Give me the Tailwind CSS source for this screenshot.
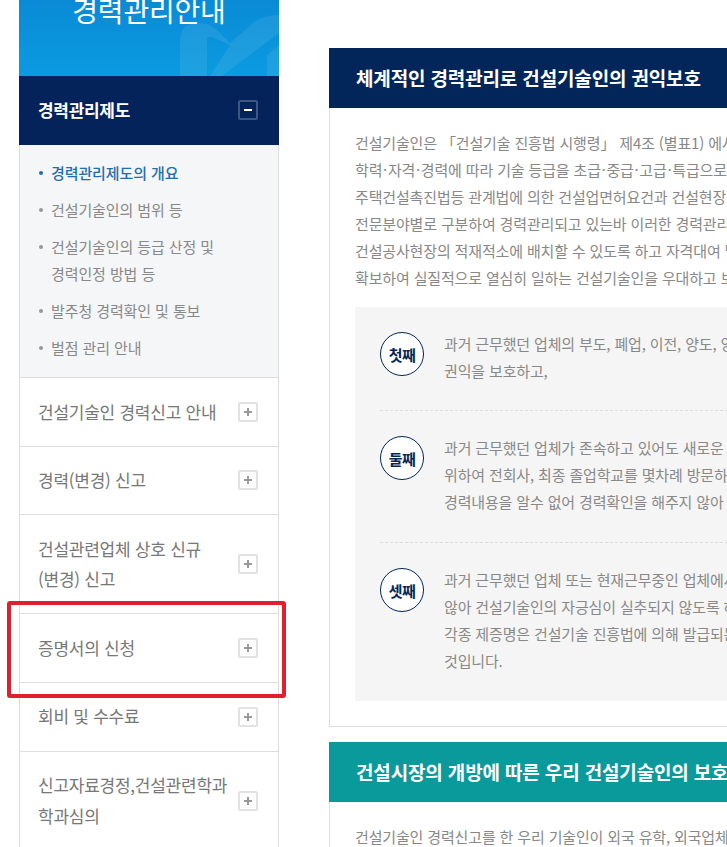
<!DOCTYPE html>
<html lang="ko">
<head>
<meta charset="UTF-8">
<title>경력관리안내</title>
<script src="https://cdn.jsdelivr.net/npm/@tailwindcss/browser@4"></script>
</head>
<body class="bg-white">
<div class="relative flex w-[727px] h-[847px] overflow-hidden font-['Noto_Sans_CJK_KR','Noto_Sans',sans-serif]">

  <!-- left menu -->
  <aside class="w-[260px] ml-[19px] shrink-0">
    <div class="relative h-[76px] overflow-hidden bg-gradient-to-b from-[#0a8ad6] to-[#0a9be0]">
      <h2 class="-mt-[10px] text-center text-[28px] leading-[40px] tracking-[-0.2px] text-white">경력관리안내</h2>
      <svg class="absolute left-[160px] top-0" width="100" height="76" viewBox="0 0 100 76" fill="#fff" fill-opacity=".08">
        <path d="M1 76V38Q3 24 16 23H22Q32 24 38 30L51 43 78 20Q88 15 100 15V33L43 76H31L51 45 33 37H28V76Z"/>
        <path d="M100 45 88 55V76H100Z"/>
      </svg>
    </div>

    <div class="flex items-center justify-between h-[69px] pb-0.5 pl-[19px] pr-[21px] bg-[#03235a]">
      <span class="text-[17px] font-bold tracking-[-0.3px] text-white">경력관리제도</span>
      <span class="flex items-center justify-center w-5 h-5 rounded-[2px] border-2 border-[#3c5785]">
        <span class="w-2 h-0.5 bg-white"></span>
      </span>
    </div>

    <ul class="flex flex-col gap-[10px] pt-[14px] pb-[16px] pl-[19px] bg-[#f5f6f7] border-x border-[#ddd] text-[15px] leading-[27px] tracking-[-0.1px] text-[#888]">
      <li class="relative pl-[12px] font-medium text-[#1f6fae]"><span class="absolute left-0 top-[12px] w-1 h-1 rounded-full bg-[#1f6fae]"></span>경력관리제도의 개요</li>
      <li class="relative pl-[12px]"><span class="absolute left-0 top-[12px] w-1 h-1 rounded-full bg-[#999]"></span>건설기술인의 범위 등</li>
      <li class="relative pl-[12px]"><span class="absolute left-0 top-[12px] w-1 h-1 rounded-full bg-[#999]"></span>건설기술인의 등급 산정 및<br>경력인정 방법 등</li>
      <li class="relative pl-[12px]"><span class="absolute left-0 top-[12px] w-1 h-1 rounded-full bg-[#999]"></span>발주청 경력확인 및 통보</li>
      <li class="relative pl-[12px]"><span class="absolute left-0 top-[12px] w-1 h-1 rounded-full bg-[#999]"></span>벌점 관리 안내</li>
    </ul>

    <ul class="border-x border-[#ddd] text-[17px] leading-[30.6px] tracking-[-0.25px] text-[#777]">
      <li class="flex items-center justify-between py-[18.5px] pl-[18px] pr-5 border-t border-[#ddd]">
        <span>건설기술인 경력신고 안내</span>
        <span class="flex items-center justify-center w-5 h-5 rounded-[2px] border-2 border-[#e2e2e2] text-[#999]"><svg width="10" height="10" viewBox="0 0 10 10"><path d="M5 1v8M1 5h8" stroke="currentColor" stroke-width="2"/></svg></span>
      </li>
      <li class="flex items-center justify-between py-[18.5px] pl-[18px] pr-5 border-t border-[#ddd]">
        <span>경력(변경) 신고</span>
        <span class="flex items-center justify-center w-5 h-5 rounded-[2px] border-2 border-[#e2e2e2] text-[#999]"><svg width="10" height="10" viewBox="0 0 10 10"><path d="M5 1v8M1 5h8" stroke="currentColor" stroke-width="2"/></svg></span>
      </li>
      <li class="flex items-center justify-between py-[18.5px] pl-[18px] pr-5 border-t border-[#ddd]">
        <span>건설관련업체 상호 신규<br>(변경) 신고</span>
        <span class="flex items-center justify-center w-5 h-5 rounded-[2px] border-2 border-[#e2e2e2] text-[#999]"><svg width="10" height="10" viewBox="0 0 10 10"><path d="M5 1v8M1 5h8" stroke="currentColor" stroke-width="2"/></svg></span>
      </li>
      <li class="flex items-center justify-between py-[18.5px] pl-[18px] pr-5 border-t border-[#ddd]">
        <span>증명서의 신청</span>
        <span class="flex items-center justify-center w-5 h-5 rounded-[2px] border-2 border-[#e2e2e2] text-[#999]"><svg width="10" height="10" viewBox="0 0 10 10"><path d="M5 1v8M1 5h8" stroke="currentColor" stroke-width="2"/></svg></span>
      </li>
      <li class="flex items-center justify-between py-[18.5px] pl-[18px] pr-5 border-t border-[#ddd]">
        <span>회비 및 수수료</span>
        <span class="flex items-center justify-center w-5 h-5 rounded-[2px] border-2 border-[#e2e2e2] text-[#999]"><svg width="10" height="10" viewBox="0 0 10 10"><path d="M5 1v8M1 5h8" stroke="currentColor" stroke-width="2"/></svg></span>
      </li>
      <li class="flex items-center justify-between py-[18.5px] pl-[18px] pr-5 border-t border-[#ddd]">
        <span>신고자료경정,건설관련학과<br>학과심의</span>
        <span class="flex items-center justify-center w-5 h-5 rounded-[2px] border-2 border-[#e2e2e2] text-[#999]"><svg width="10" height="10" viewBox="0 0 10 10"><path d="M5 1v8M1 5h8" stroke="currentColor" stroke-width="2"/></svg></span>
      </li>
    </ul>
  </aside>

  <!-- right content -->
  <main class="w-[700px] shrink-0 ml-[50px] pt-[48px] text-[15px] leading-[27px] tracking-[-0.15px] text-[#888] whitespace-nowrap">
    <h3 class="h-[60px] pl-[27px] bg-[#03265a] text-[19px] font-bold leading-[60px] tracking-[-0.15px] text-white">체계적인 경력관리로 건설기술인의 권익보호</h3>
    <div class="pt-[21px] pb-[25px] pl-[25px] border-x border-b border-[#ddd]">
      <p>건설기술인은 「건설기술 진흥법 시행령」 제4조 (별표1) 에서<br>
      학력&#8202;·&#8202;자격&#8202;·&#8202;경력에 따라 기술 등급을 초급&#8202;·&#8202;중급&#8202;·&#8202;고급&#8202;·&#8202;특급으로<br>
      주택건설촉진법등 관계법에 의한 건설업면허요건과 건설현장<br>
      전문분야별로 구분하여 경력관리되고 있는바 이러한 경력관리<br>
      건설공사현장의 적재적소에 배치할 수 있도록 하고 자격대여 및<br>
      확보하여 실질적으로 열심히 일하는 건설기술인을 우대하고 보</p>

      <div class="mt-4 bg-[#f5f5f5] px-[25px]">
        <div class="flex gap-5 pt-[25px] pb-[26px] border-b border-dashed border-[#ddd]">
          <span class="flex items-center justify-center shrink-0 w-[44px] h-[44px] rounded-full border border-[#03265a] bg-white text-[15px] font-bold tracking-[-0.5px] text-[#03265a]">첫째</span>
          <p class="-mt-0.5">과거 근무했던 업체의 부도, 폐업, 이전, 양도, 양<br>권익을 보호하고,</p>
        </div>
        <div class="flex gap-5 pt-[25px] pb-[27px] border-b border-dashed border-[#ddd]">
          <span class="flex items-center justify-center shrink-0 w-[44px] h-[44px] rounded-full border border-[#03265a] bg-white text-[15px] font-bold tracking-[-0.5px] text-[#03265a]">둘째</span>
          <p class="-mt-0.5">과거 근무했던 업체가 존속하고 있어도 새로운 업<br>위하여 전회사, 최종 졸업학교를 몇차례 방문하<br>경력내용을 알수 없어 경력확인을 해주지 않아</p>
        </div>
        <div class="flex gap-5 pt-[25px] pb-[27px]">
          <span class="flex items-center justify-center shrink-0 w-[44px] h-[44px] rounded-full border border-[#03265a] bg-white text-[15px] font-bold tracking-[-0.5px] text-[#03265a]">셋째</span>
          <p class="-mt-0.5">과거 근무했던 업체 또는 현재근무중인 업체에서<br>않아 건설기술인의 자긍심이 실추되지 않도록 하<br>각종 제증명은 건설기술 진흥법에 의해 발급되는<br>것입니다.</p>
        </div>
      </div>
    </div>

    <h3 class="mt-[15px] h-[60px] pl-[27px] bg-[#0a9a9c] text-[19px] font-bold leading-[60px] tracking-[-0.15px] text-white">건설시장의 개방에 따른 우리 건설기술인의 보호</h3>
    <div class="pt-[21px] pl-[25px] border-x border-[#ddd]">
      <p>건설기술인 경력신고를 한 우리 기술인이 외국 유학, 외국업체</p>
    </div>
  </main>

  <!-- red highlight box over the menu -->
  <div class="absolute left-[7px] top-[601px] w-[279px] h-[97px] rounded-[3px] border-4 border-[#e0202c]"></div>
</div>
</body>
</html>
